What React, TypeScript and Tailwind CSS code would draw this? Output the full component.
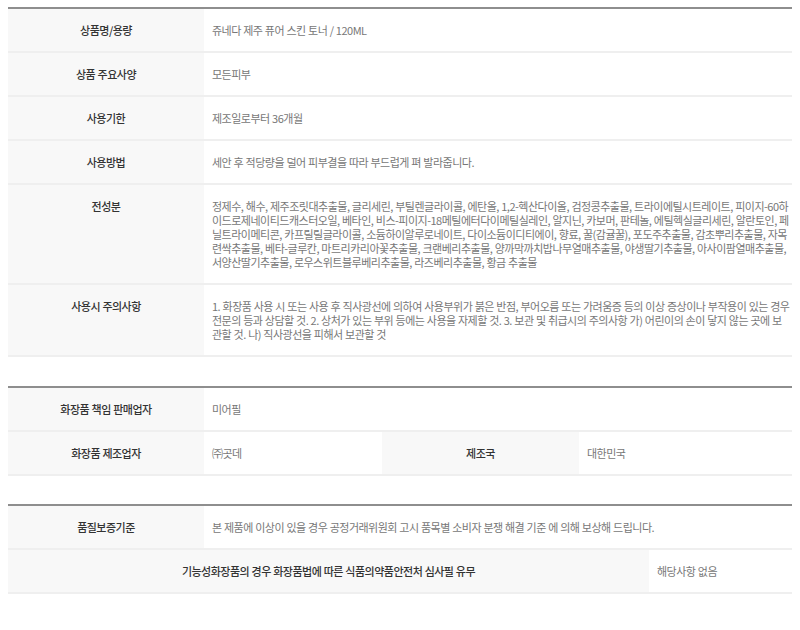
import React from 'react';

const font = { fontFamily: '"Noto Sans CJK KR", "Noto Sans", sans-serif' };

const th = 'bg-[#f8f8f8] text-[#333] font-medium text-center px-2 py-[14px]';
const td = 'bg-white text-[#777] pl-2 pr-1 py-[14px] break-all';

const ingredients = [
  '정제수, 해수, 제주조릿대추출물, 글리세린, 부틸렌글라이콜, 에탄올, 1,2-헥산다이올, 검정콩추출물, 트라이에틸시트레이트, 피이지-60하',
  '이드로제네이티드캐스터오일, 베타인, 비스-피이지-18메틸에터다이메틸실레인, 알지닌, 카보머, 판테놀, 에틸헥실글리세린, 알란토인, 페',
  '닐트라이메티콘, 카프릴릴글라이콜, 소듐하이알루로네이트, 다이소듐이디티에이, 향료, 꿀(감귤꿀), 포도주추출물, 감초뿌리추출물, 자목',
  '련싹추출물, 베타-글루칸, 마트리카리아꽃추출물, 크랜베리추출물, 양까막까치밥나무열매추출물, 야생딸기추출물, 아사이팜열매추출물,',
  '서양산딸기추출물, 로우스위트블루베리추출물, 라즈베리추출물, 황금 추출물',
];

const caution = [
  '1. 화장품 사용 시 또는 사용 후 직사광선에 의하여 사용부위가 붉은 반점, 부어오름 또는 가려움증 등의 이상 증상이나 부작용이 있는 경우',
  '전문의 등과 상담할 것. 2. 상처가 있는 부위 등에는 사용을 자제할 것. 3. 보관 및 취급시의 주의사항 가) 어린이의 손이 닿지 않는 곳에 보',
  '관할 것. 나) 직사광선을 피해서 보관할 것',
];

function Lines({ lines }: { lines: string[] }) {
  return (
    <>
      {lines.map((l, i) => (
        <span key={i} className="block whitespace-nowrap">
          {l}
        </span>
      ))}
    </>
  );
}

const info: { label: string; value: React.ReactNode }[] = [
  { label: '상품명/용량', value: '쥬네다 제주 퓨어 스킨 토너 / 120ML' },
  { label: '상품 주요사양', value: '모든피부' },
  { label: '사용기한', value: '제조일로부터 36개월' },
  { label: '사용방법', value: '세안 후 적당량을 덜어 피부결을 따라 부드럽게 펴 발라줍니다.' },
  { label: '전성분', value: <Lines lines={ingredients} /> },
  { label: '사용시 주의사항', value: <Lines lines={caution} /> },
];

export default function App() {
  return (
    <div
      className="w-[800px] h-[630px] bg-white px-2 pt-[7px] text-[11px] leading-[14px] tracking-[-0.5px] [word-spacing:0.4px]"
      style={font}
    >
      {/* 상품 정보 */}
      <div className="border-t-2 border-[#8e8e8e]">
        {info.map((row) => (
          <div key={row.label} className="grid grid-cols-[196px_1fr] border-b-2 border-[#efefef]">
            <div className={th}>{row.label}</div>
            <div className={td}>{row.value}</div>
          </div>
        ))}
      </div>

      {/* 판매 / 제조 */}
      <div className="mt-[29px] border-t-2 border-[#8e8e8e]">
        <div className="grid grid-cols-[196px_1fr] border-b-2 border-[#efefef]">
          <div className={th}>화장품 책임 판매업자</div>
          <div className={td}>미어필</div>
        </div>
        <div className="grid grid-cols-[196px_178px_197px_1fr] border-b-2 border-[#efefef]">
          <div className={th}>화장품 제조업자</div>
          <div className={td}>㈜곳데</div>
          <div className={th}>제조국</div>
          <div className={td}>대한민국</div>
        </div>
      </div>

      {/* 품질보증 */}
      <div className="mt-[28px] border-t-2 border-[#8e8e8e]">
        <div className="grid grid-cols-[196px_1fr] border-b-2 border-[#efefef]">
          <div className={th}>품질보증기준</div>
          <div className={td}>본 제품에 이상이 있을 경우 공정거래위원회 고시 품목별 소비자 분쟁 해결 기준 에 의해 보상해 드립니다.</div>
        </div>
        <div className="grid grid-cols-[641px_1fr] border-b-2 border-[#efefef]">
          <div className={th}>기능성화장품의 경우 화장품법에 따른 식품의약품안전처 심사필 유무</div>
          <div className={td}>해당사항 없음</div>
        </div>
      </div>
    </div>
  );
}
